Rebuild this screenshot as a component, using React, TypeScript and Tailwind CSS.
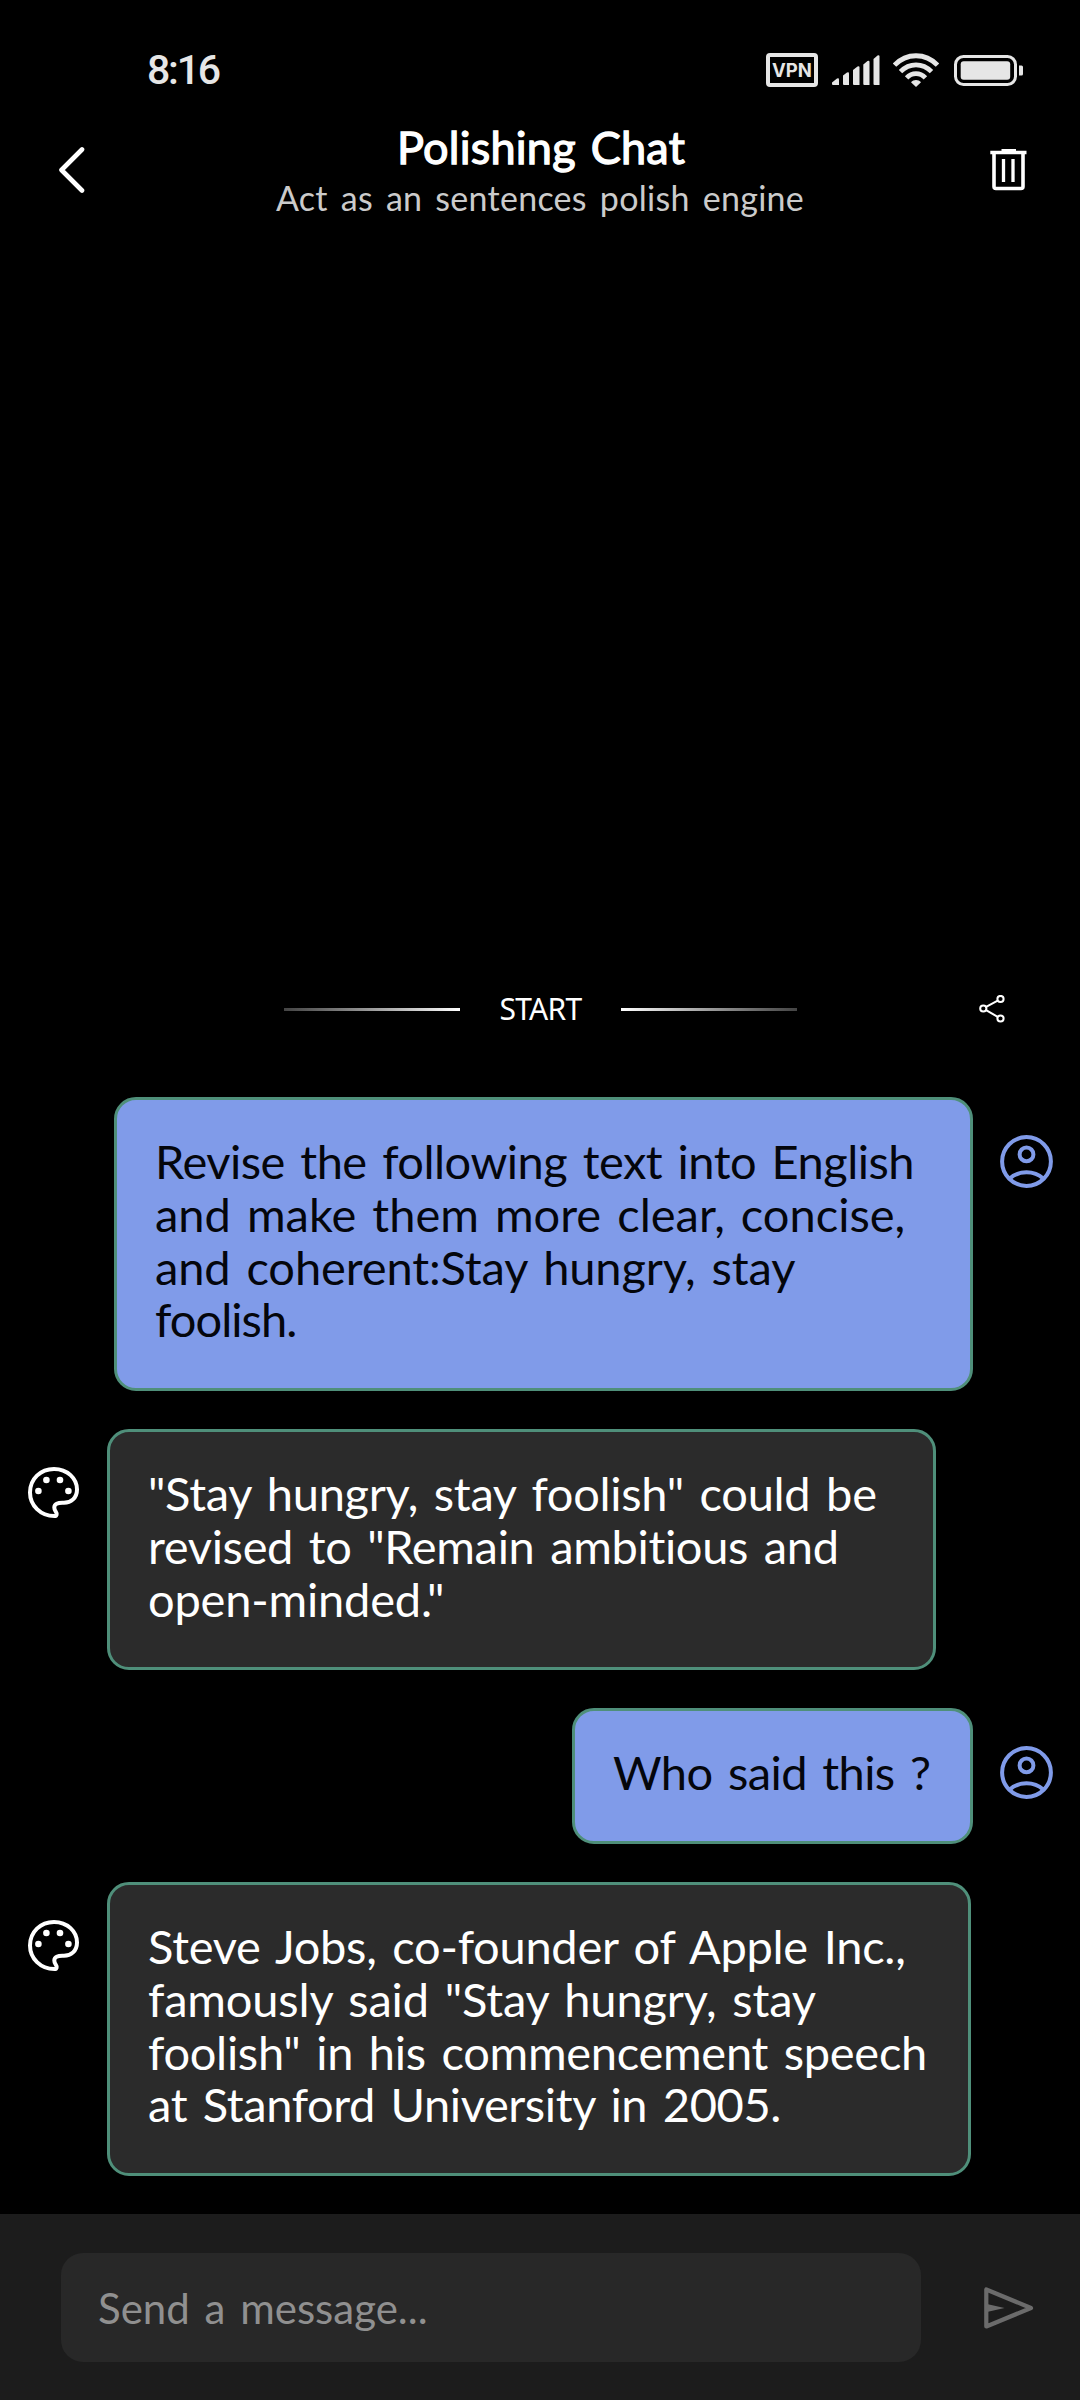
type Line = { text: string; spacing: string };
type Message = { from: "user" | "bot"; width: string; lines: Line[] };

const messages: Message[] = [
  {
    from: "user",
    width: "w-[859px]",
    lines: [
      { text: "Revise the following text into English", spacing: "tracking-[-0.52px]" },
      { text: "and make them more clear, concise,", spacing: "tracking-[0px]" },
      { text: "and coherent:Stay hungry, stay", spacing: "tracking-[-0.12px]" },
      { text: "foolish.", spacing: "tracking-[-0.95px]" },
    ],
  },
  {
    from: "bot",
    width: "w-[829px]",
    lines: [
      { text: '"Stay hungry, stay foolish" could be', spacing: "tracking-[-0.3px]" },
      { text: 'revised to "Remain ambitious and', spacing: "tracking-[-0.34px]" },
      { text: 'open-minded."', spacing: "tracking-[-0.2px]" },
    ],
  },
  {
    from: "user",
    width: "w-[401px]",
    lines: [{ text: "Who said this ?", spacing: "tracking-[-0.6px]" }],
  },
  {
    from: "bot",
    width: "w-[864px]",
    lines: [
      { text: "Steve Jobs, co-founder of Apple Inc.,", spacing: "tracking-[-0.27px]" },
      { text: 'famously said "Stay hungry, stay', spacing: "tracking-[-0.17px]" },
      { text: 'foolish" in his commencement speech', spacing: "tracking-[-0.3px]" },
      { text: "at Stanford University in 2005.", spacing: "tracking-[-0.4px]" },
    ],
  },
];

function SignalIcon() {
  return (
    <svg width="48" height="32" viewBox="0 0 48 32" fill="#e6e6e6">
      <path d="M0 30V28.5L5 24.5Q7 23.500 7 25.500V31H1Q0 31 0 30Z" />
      <path d="M11 30V21.500L15 18.500Q17 17.500 17 19.500V31H12Q11 31 11 30Z" />
      <path d="M21 30V16L25.500 12.500Q27.500 11.500 27.500 13.500V31H22Q21 31 21 30Z" />
      <path d="M31.300 30V10.500L35.500 7Q37.500 6 37.500 8V31H32.300Q31.300 31 31.300 30Z" />
      <path d="M41.500 30V5L45.500 1.500Q47.500 0.500 47.500 2.500V31H42.500Q41.500 31 41.500 30Z" />
    </svg>
  );
}

function WifiIcon() {
  return (
    <svg width="46" height="34" viewBox="0 0 46 34" fill="none" stroke="#e6e6e6" strokeWidth="4.800">
      <path d="M1.500 12.200C13.500 -0.400 32.500 -0.400 44.500 12.200" />
      <path d="M7.500 18.600C16.500 9.600 29.500 9.600 38.500 18.600" />
      <path d="M13.600 24.900C19 19.300 27 19.300 32.400 24.900" />
      <path d="M23 34L18 29.200C20.700 26.200 25.300 26.200 28 29.200Z" fill="#e6e6e6" stroke="none" />
    </svg>
  );
}

function BatteryIcon() {
  return (
    <svg width="70" height="31" viewBox="0 0 70 31" fill="none">
      <rect x="1.500" y="1.500" width="60" height="28" rx="8" stroke="#e6e6e6" strokeWidth="3" />
      <rect x="6.700" y="6.300" width="49.500" height="18.400" rx="3" fill="#e6e6e6" />
      <path d="M65 10.500H67.500Q69 10.500 69 12V19Q69 20.500 67.500 20.500H65Z" fill="#e6e6e6" />
    </svg>
  );
}

function TrashIcon() {
  return (
    <svg width="37" height="42" viewBox="0 0 37 42" fill="none" stroke="#fff" strokeWidth="3.300">
      <path d="M11.500 1.400H26" strokeWidth="2.800" />
      <path d="M0.300 3.500H36.500" />
      <path d="M4 4V37.500Q4 39.500 6 39.500H31Q33 39.500 33 37.500V4" strokeWidth="3.600" />
      <path d="M13.500 10V33M23 10V33" strokeWidth="3.300" />
    </svg>
  );
}

function ShareIcon() {
  return (
    <svg width="26" height="28" viewBox="0 0 26 28" fill="none" stroke="#fff" strokeWidth="2">
      <circle cx="4.300" cy="13.500" r="3.100" />
      <circle cx="21.500" cy="4" r="3.100" />
      <circle cx="21.500" cy="23.500" r="3.100" />
      <path d="M7.100 11.900L18.700 5.700M7.100 15.100L18.700 21.900" />
    </svg>
  );
}

function UserIcon() {
  return (
    <svg className="mt-[38px] shrink-0" width="53" height="53" viewBox="0 0 53 53" fill="none" stroke="#809be9" strokeWidth="4">
      <circle cx="26.500" cy="26.500" r="24.400" />
      <circle cx="26.500" cy="19.400" r="6.900" />
      <path d="M9.500 43.800C19 35.200 34 35.200 43.500 43.800" />
    </svg>
  );
}

function PaletteIcon() {
  return (
    <svg className="mt-[38px] shrink-0" width="51" height="51" viewBox="0 0 51 51" fill="none">
      <path
        d="M26.500 49C12.500 49 2 38.500 2 25.500C2 12 12.500 2 26 2C39.500 2 49 11.500 49 22.500C49 31 43 36 35.500 35.800C29.500 35.600 26.300 37 26.300 40.500C26.300 44.500 29.200 45 28.600 47.600Q28.200 49 26.500 49Z"
        stroke="#fff"
        strokeWidth="4"
        strokeLinejoin="round"
      />
      <g fill="#fff">
        <circle cx="18.400" cy="13" r="3.300" />
        <circle cx="32" cy="13" r="3.300" />
        <circle cx="10.400" cy="24" r="3.300" />
        <circle cx="40.400" cy="24" r="3.300" />
      </g>
    </svg>
  );
}

function SendIcon() {
  return (
    <svg width="50" height="42" viewBox="0 0 50 42" fill="none">
      <path d="M2.300 2.500V39.500L47 21Z" stroke="#6b6b6b" strokeWidth="4.200" strokeLinejoin="round" />
      <path d="M4 17.300L20.500 21L4 24.700Z" fill="#6b6b6b" />
    </svg>
  );
}

function Bubble({ message }: { message: Message }) {
  const mine = message.from === "user";
  return (
    <div
      className={`${message.width} rounded-[22px] border-3 border-[#4f8f7a] pt-[35px] pr-5 pb-[42px] pl-[38px] text-[47px] leading-[52.750px] [word-spacing:4px] ${
        mine ? "bg-[#809be9] text-[#04060c]" : "bg-[#2b2b2b] text-white"
      }`}
    >
      {message.lines.map((line) => (
        <p key={line.text} className={`whitespace-nowrap ${line.spacing}`}>
          {line.text}
        </p>
      ))}
    </div>
  );
}

export default function App() {
  return (
    <div className="flex h-[2400px] w-[1080px] flex-col overflow-hidden bg-black font-['Lato',sans-serif] text-white">
      <div className="flex h-[119px] shrink-0 items-start justify-between pt-[46px] pr-[56px] pl-[147px]">
        <span className="font-['Roboto',sans-serif] text-[41px] leading-[48px] font-medium tracking-[-2.200px] text-[#e6e6e6]">8:16</span>
        <div className="flex h-12 items-center">
          <div className="mr-[14px] flex h-[34px] w-[52px] items-center justify-center rounded-[4px] border-4 border-[#e6e6e6] font-['Inter',sans-serif] text-[18.500px] leading-none font-bold text-[#e6e6e6]">
            VPN
          </div>
          <SignalIcon />
          <div className="ml-[13px] flex items-center gap-[15px]">
            <WifiIcon />
            <BatteryIcon />
          </div>
        </div>
      </div>

      <header className="flex h-[101px] shrink-0 items-center justify-between pr-[53px] pl-[58px]">
        <svg width="32" height="46" viewBox="0 0 32 46" fill="none" stroke="#fff" strokeWidth="4.600" strokeLinecap="round" strokeLinejoin="round">
          <path d="M24 2.500L3.500 23L24 43.500" />
        </svg>
        <div className="text-center">
          <h1 className="pl-[2px] text-[45px] leading-[57px] font-normal tracking-[0.25px] [word-spacing:3px] [-webkit-text-stroke:1.3px_white]">Polishing Chat</h1>
          <p className="text-[34px] leading-[44px] tracking-[0.28px] text-[#cbcbcb] [word-spacing:4px]">Act as an sentences polish engine</p>
        </div>
        <TrashIcon />
      </header>

      <main className="flex grow flex-col justify-end pb-[38px]">
        <div className="mb-[74px] flex h-7 items-center pl-[284px]">
          <div className="h-[3px] w-44 bg-linear-to-r from-[#444] to-white" />
          <span className="w-[161px] text-center font-['Noto_Sans',sans-serif] text-[30px] leading-7 tracking-[-0.7px]">START</span>
          <div className="h-[3px] w-44 bg-linear-to-r from-white to-[#444]" />
          <div className="ml-[182px]">
            <ShareIcon />
          </div>
        </div>

        <div className="flex flex-col gap-[38px]">
          {messages.map((message, i) =>
            message.from === "user" ? (
              <div key={i} className="flex items-start justify-end gap-[27px] pr-[27px]">
                <Bubble message={message} />
                <UserIcon />
              </div>
            ) : (
              <div key={i} className="flex items-start gap-7 pl-7">
                <PaletteIcon />
                <Bubble message={message} />
              </div>
            ),
          )}
        </div>
      </main>

      <footer className="flex h-[186px] shrink-0 items-start bg-[#1c1c1c] pt-[39px] pl-[61px]">
        <div className="flex h-[109px] w-[860px] items-center rounded-[22px] bg-[#282828] pl-[37px] text-[42px] leading-[54px] text-[#909090] [word-spacing:4px]">
          Send a message...
        </div>
        <div className="ml-[63px] flex h-[109px] items-center">
          <SendIcon />
        </div>
      </footer>
    </div>
  );
}
